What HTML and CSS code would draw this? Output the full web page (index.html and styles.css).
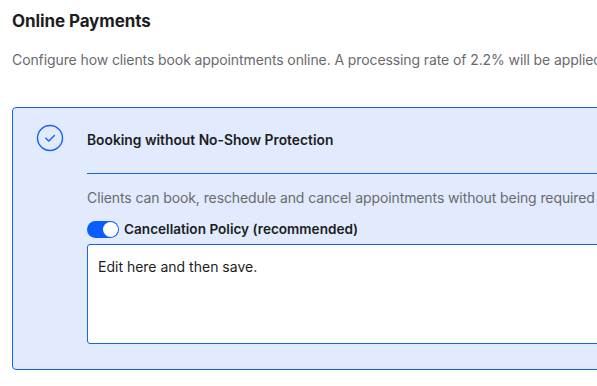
FILE: index.html
```html
<!DOCTYPE html>
<html lang="en">
<head>
    <meta charset="UTF-8">
    <title>Online Payments</title>
    <link rel="stylesheet" href="styles.css">
</head>
<body>
<section class="page">
    <h2 class="title">Online Payments</h2>
    <p class="intro">Configure how clients book appointments online. A processing rate of 2.2% will be applied to each transaction.</p>
    <div class="option">
        <div class="option-icon">
            <svg width="28" height="28" viewBox="0 0 28 28">
                <circle cx="14" cy="14" r="12.5" fill="none" stroke="#1463f3" stroke-width="1.4"/>
                <path d="M9.8 14.2l3 2.9 5.6-5.6" fill="none" stroke="#1463f3" stroke-width="1.4" stroke-linecap="round" stroke-linejoin="round"/>
            </svg>
        </div>
        <div class="option-body">
            <div class="option-head">Booking without No-Show Protection</div>
            <div class="option-content">
                <p class="option-desc">Clients can book, reschedule and cancel appointments without being required to pay upfront.</p>
                <label class="switch-row">
                    <span class="switch"><span class="knob"></span></span>
                    <span class="switch-label">Cancellation Policy (recommended)</span>
                </label>
                <div class="policy">Edit here and then save.</div>
            </div>
        </div>
    </div>
</section>
</body>
</html>
```
FILE: styles.css
```css
body,h1,h2,h3,p{margin: 0;padding: 0;}
html,body{ overflow: hidden; }
body{ font-family: Inter, "Noto Sans", sans-serif; color: #1d1d1f; background: #fff; }
.page{ padding: 10px 0 0 12px; width: 760px; }
.title{ font-size: 17px; font-weight: 700; line-height: 22px; letter-spacing: -0.1px; }
.intro{ margin-top: 18px; font-size: 14px; line-height: 20px; color: #6a6a6e; white-space: nowrap; letter-spacing: -0.1px; }
.option{ display: flex; margin-top: 37px; background: #e1ebfd; border: 1px solid #1463f3; border-radius: 4px; }
.option-icon{ width: 74px; padding-top: 16px; display: flex; justify-content: center; align-items: flex-start; box-sizing: border-box; }
.option-icon svg{ display: block; }
.option-body{ flex: 1; }
.option-head{ height: 66px; display: flex; align-items: center; font-size: 13.8px; font-weight: 600; border-bottom: 1px solid #1463f3; padding-bottom: 2px; box-sizing: border-box; }
.option-content{ padding: 14px 0 25px; }
.option-desc{ font-size: 14px; line-height: 20px; color: #6a6a6e; white-space: nowrap; letter-spacing: -0.1px; }
.switch-row{ display: flex; align-items: center; gap: 5px; margin-top: 11px; height: 20px; }
.switch{ width: 32px; height: 17px; border-radius: 9px; background: #0b5cff; display: flex; justify-content: flex-end; align-items: center; padding: 0 1px; box-sizing: border-box; }
.knob{ width: 15px; height: 15px; border-radius: 50%; background: #fff; }
.switch-label{ font-size: 13.6px; font-weight: 600; }
.policy{ margin-top: 5px; height: 100px; background: #fff; border: 1px solid #1463f3; border-radius: 3px; padding: 12px 10px; box-sizing: border-box; font-size: 14px; line-height: 20px; }
```
